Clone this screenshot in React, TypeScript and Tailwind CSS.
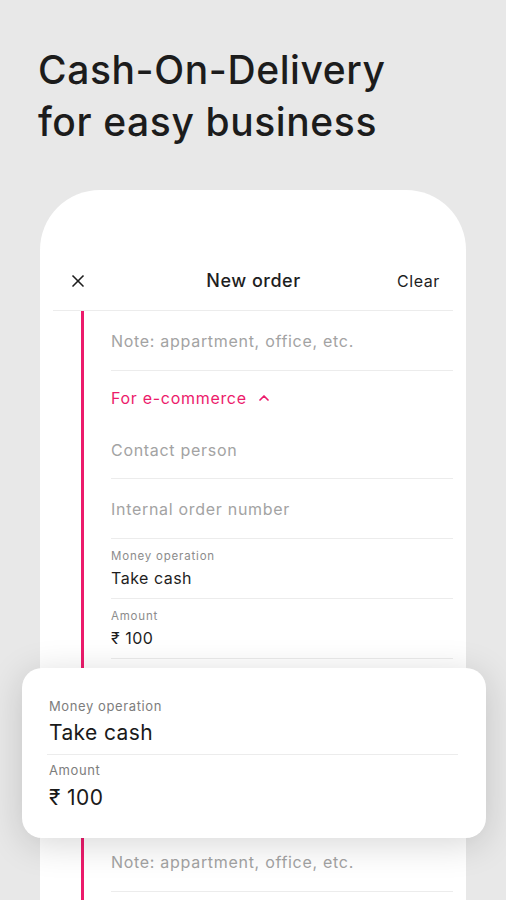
import { X, ChevronUp } from 'lucide-react';

function Field({ text }: { text: string }) {
	return (
		<div className="h-[60px] flex items-center border-b border-[#ececec]">
			<p className="text-[16px] tracking-[0.7px] text-[#a3a3a3]">{text}</p>
		</div>
	);
}

function Value({ label, value }: { label: string; value: string }) {
	return (
		<div className="h-[60px] flex flex-col justify-center border-b border-[#ececec]">
			<p className="text-[11.5px] leading-[14px] tracking-[0.8px] text-[#8c8c8c]">{label}</p>
			<p className="text-[16px] leading-[22px] mt-[4px] tracking-[0.5px] text-[#1e1e1e]">{value}</p>
		</div>
	);
}

export default function App() {
	return (
		<div
			className="relative w-[506px] h-[900px] overflow-hidden bg-[#e8e8e8]"
			style={{ fontFamily: 'Inter, "Noto Sans", sans-serif' }}
		>
			<h1 className="pt-[44px] pl-[38px] text-[39px] leading-[52px] font-medium text-[#1c1c1c] tracking-[0.6px]">
				Cash-On-Delivery
				<br />
				for easy business
			</h1>

			<section className="mt-[42px] mx-[40px] h-[800px] bg-white rounded-t-[60px] pt-[61px] px-[13px]">
				<header className="h-[60px] flex items-center justify-between border-b border-[#ececec] pl-[15px] pr-[13px]">
					<X className="w-5 h-5 text-[#1e1e1e]" strokeWidth={2} />
					<p className="text-[18px] font-medium tracking-[0.5px] text-[#1e1e1e] ml-[22px]">New order</p>
					<p className="text-[16px] tracking-[0.6px] text-[#1e1e1e]">Clear</p>
				</header>

				<div className="flex">
					<div className="w-[3px] ml-[28px] bg-[#ec1b6b]" />
					<div className="flex-1 ml-[27px]">
						<Field text="Note: appartment, office, etc." />
						<div className="h-[50px] flex items-center pt-[4px] gap-[9px] text-[#ec1b6b]">
							<p className="text-[16px] tracking-[0.7px]">For e-commerce</p>
							<ChevronUp className="w-4 h-4" strokeWidth={2.6} />
						</div>
						<div className="h-[58px] flex items-center border-b border-[#ececec]">
							<p className="text-[16px] tracking-[0.7px] text-[#a3a3a3]">Contact person</p>
						</div>
						<Field text="Internal order number" />
						<Value label="Money operation" value="Take cash" />
						<Value label="Amount" value="₹ 100" />
						<div className="h-[173px]" />
						<Field text="Note: appartment, office, etc." />
						<div className="h-[60px]" />
					</div>
				</div>
			</section>

			<div className="absolute left-[22px] top-[668px] w-[464px] h-[170px] bg-white rounded-[20px] shadow-[0_6px_36px_rgba(0,0,0,0.16)] pl-[27px] pr-[28px] pt-[29px]">
				<p className="text-[13px] leading-[18px] tracking-[0.6px] text-[#7d7d7d]">Money operation</p>
				<p className="text-[21px] leading-[28px] mt-[4px] tracking-[0.4px] text-[#1a1a1a]">Take cash</p>
				<div className="mt-[7px] -ml-[2px] border-b border-[#ececec]" />
				<p className="text-[13px] leading-[18px] mt-[6px] tracking-[0.6px] text-[#7d7d7d]">Amount</p>
				<p className="text-[21px] leading-[28px] mt-[5px] tracking-[0.4px] text-[#1a1a1a]">₹ 100</p>
			</div>
		</div>
	);
}
